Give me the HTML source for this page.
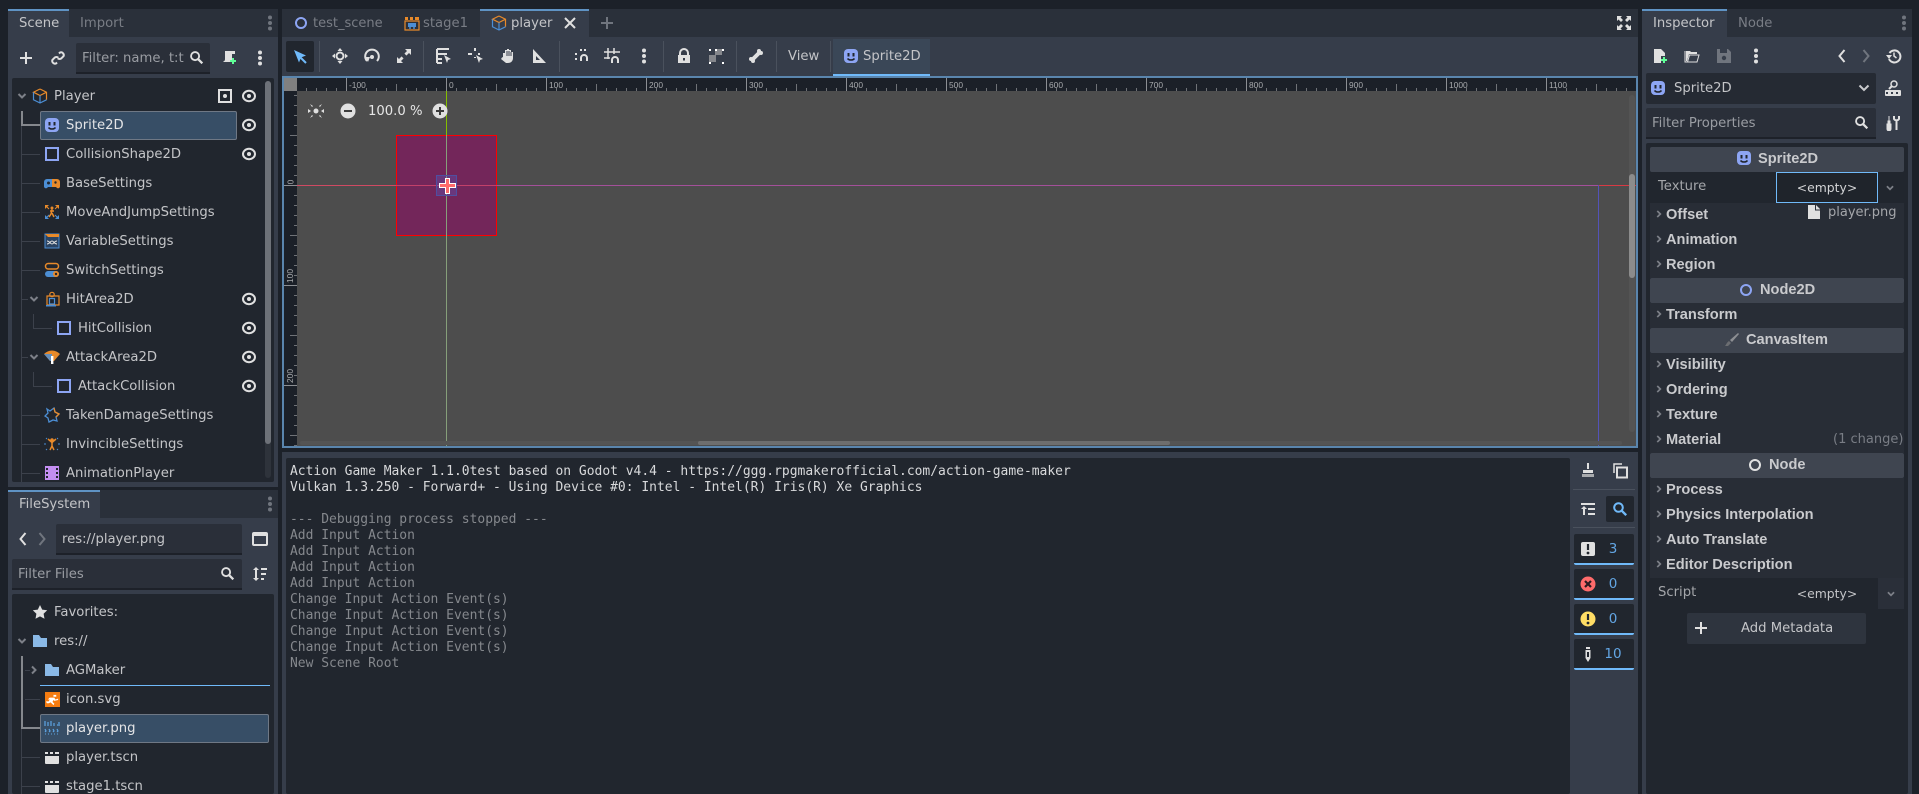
<!DOCTYPE html>
<html><head><meta charset="utf-8"><title>Editor</title>
<style>
html,body{margin:0;padding:0;background:#1c2129;overflow:hidden}
#r{position:relative;width:1919px;height:794px;overflow:hidden;background:#1c2129;font-family:"DejaVu Sans","Liberation Sans",sans-serif;font-size:13.2px;color:#c4c5c8}
#r div,#r span,#r svg{position:absolute}
.t{white-space:nowrap;line-height:20px;height:20px;margin-top:1px}
.dim{color:#797d85}
.b{font-family:"Liberation Sans",sans-serif;font-weight:bold;font-size:14.6px;color:#c9cacd}
.p{background:#363d4a}
.d{background:#21262e}
.f{background:#2a2f39;border-bottom:2px solid #1d2129;box-sizing:border-box;border-radius:2px 2px 0 0}
.hdr{background:#3f4550;left:1650px;width:254px;height:25px;border-radius:2px}
.sec{background:#282d36;left:1650px;width:254px;height:25px}
.sep{background:#4a515d;width:1px;top:41px;height:31px}
.tl{background:#3c414b}
.rl{font-family:"Liberation Sans",sans-serif;font-size:8.4px;color:#a8aaad;line-height:12px;height:12px;white-space:nowrap}
.m{font-family:"DejaVu Sans Mono","Liberation Mono",monospace;font-size:12.97px;line-height:16px;height:16px;white-space:pre;left:290px;color:#85888d;margin-top:1px}
.fb{left:1574px;width:60px;height:31px;background:#21262e;border-bottom:2px solid #70bafa;box-sizing:border-box;border-radius:2px}
.fn{left:1598px;width:30px;text-align:center;color:#63a6e4;font-size:13.5px;line-height:20px;height:20px}
.e{font-size:12.4px}
</style></head><body>
<svg width="0" height="0" style="position:absolute;left:0;top:0"><defs>
<symbol id="plus" viewBox="0 0 16 16"><path d="M8 2v12M2 8h12" stroke="#e0e0e0" stroke-width="2"/></symbol>
<symbol id="link" viewBox="0 0 16 16"><path d="M9 3.5l1-1a2.8 2.8 0 0 1 3.6 3.6l-2.2 2.2a2.8 2.8 0 0 1-3.6 0M7 12.5l-1 1a2.8 2.8 0 0 1-3.6-3.6l2.2-2.2a2.8 2.8 0 0 1 3.6 0" stroke="#e0e0e0" stroke-width="2" fill="none"/></symbol>
<symbol id="srch" viewBox="0 0 16 16"><circle cx="6.5" cy="6.5" r="4.3" stroke="#e0e0e0" stroke-width="2" fill="none"/><path d="M9.8 9.8l4.4 4.4" stroke="#e0e0e0" stroke-width="2.4"/></symbol>
<symbol id="srchb" viewBox="0 0 16 16"><circle cx="6.5" cy="6.5" r="4.3" stroke="#70bafa" stroke-width="2" fill="none"/><path d="M9.8 9.8l4.4 4.4" stroke="#70bafa" stroke-width="2.4"/></symbol>
<symbol id="vd" viewBox="0 0 16 16"><circle cx="8" cy="2.5" r="2" fill="#e0e0e0"/><circle cx="8" cy="8" r="2" fill="#e0e0e0"/><circle cx="8" cy="13.5" r="2" fill="#e0e0e0"/></symbol>
<symbol id="vdd" viewBox="0 0 16 16"><circle cx="8" cy="2.5" r="2" fill="#70757e"/><circle cx="8" cy="8" r="2" fill="#70757e"/><circle cx="8" cy="13.5" r="2" fill="#70757e"/></symbol>
<symbol id="scr" viewBox="0 0 16 16"><path d="M4 1h10v3h-3v8H2c1-1 2-1 2-3z" fill="#e0e0e0"/><path d="M12 8v6M9 11h6" stroke="#5fff97" stroke-width="2"/></symbol>
<symbol id="cube" viewBox="0 0 16 16"><path d="M8 1l6.5 3.2v7.6" stroke="#e88a2a" stroke-width="1.2" fill="none"/><path d="M8 1L1.5 4.2l6.5 3.3 6.5-3.3" stroke="#e88a2a" stroke-width="1.2" fill="none"/><path d="M1.5 4.2v7.6L8 15l6.5-3.2M8 7.5V15" stroke="#4c8ed4" stroke-width="1.2" fill="none"/></symbol>
<symbol id="eye" viewBox="0 0 16 16"><ellipse cx="8" cy="8" rx="6" ry="5.2" stroke="#e0e0e0" stroke-width="2" fill="none"/><circle cx="8" cy="8" r="2" fill="#e0e0e0"/></symbol>
<symbol id="sp" viewBox="0 0 16 16"><rect x="1" y="1" width="14" height="14" rx="4" fill="#8da5f3"/><rect x="4.5" y="5" width="2" height="3.5" fill="#21262e"/><rect x="9.5" y="5" width="2" height="3.5" fill="#21262e"/><path d="M4.5 10.5c1.5 2 5.5 2 7 0" stroke="#21262e" stroke-width="1.5" fill="none"/></symbol>
<symbol id="sq" viewBox="0 0 16 16"><rect x="2" y="2" width="12" height="12" stroke="#8da5f3" stroke-width="2" fill="none"/></symbol>
<symbol id="game" viewBox="0 0 16 16"><path d="M0 7a3 3 0 0 1 3-3h5v8H4l-1 1a2 2 0 0 1-3-2z" fill="#4c8ed4"/><path d="M8 4h5a3 3 0 0 1 3 3v4a2 2 0 0 1-3 2l-1-1H8z" fill="#e88a2a"/><circle cx="4.500" cy="8" r="1.500" fill="#21262e"/><circle cx="11.500" cy="7.500" r="1.200" fill="#21262e"/></symbol>
<symbol id="mv" viewBox="0 0 16 16"><path d="M1 1h4L1 5zM15 1v4l-4-4z" fill="#e88a2a"/><path d="M1 15v-4l4 4zM15 15h-4l4-4z" fill="#4c8ed4"/><path d="M2 2l3 3M14 2l-3 3" stroke="#e88a2a"/><path d="M2 14l3-3M14 14l-3-3" stroke="#4c8ed4"/><circle cx="8" cy="4" r="1.5" fill="#e88a2a"/><path d="M8 5.5L7 10l-2 3M8 9l2 4M6 7h4" stroke="#e88a2a" stroke-width="1.5" fill="none"/></symbol>
<symbol id="var" viewBox="0 0 16 16"><rect x="1" y="1" width="14" height="14" fill="#2b4463" stroke="#4c8ed4"/><path d="M1 1h14v3H4z" fill="#e88a2a"/><path d="M3 8c3 0 3 3 5 3s2-3 5-3M3 11c3 0 3-3 5-3s2 3 5 3" stroke="#e0e0e0" fill="none"/></symbol>
<symbol id="sw" viewBox="0 0 16 16"><rect x="1.5" y="1.5" width="13" height="5.5" rx="2.7" stroke="#e88a2a" stroke-width="1.5" fill="none"/><rect x="1" y="9" width="14" height="6" rx="3" fill="#4c8ed4"/><circle cx="12" cy="12" r="3" fill="#e88a2a"/><circle cx="12" cy="12" r="1.2" fill="#21262e"/></symbol>
<symbol id="hit" viewBox="0 0 16 16"><path d="M2 5h12v9H2z" stroke="#e88a2a" stroke-width="1.2" fill="none" transform="translate(1 0)"/><rect x="2" y="14" width="10" height="1.5" fill="#4c8ed4"/><circle cx="8" cy="3.5" r="2.2" stroke="#e88a2a" stroke-width="1.2" fill="none"/><path d="M5.5 13V7.5h5V13z" stroke="#4c8ed4" stroke-width="1.2" fill="none"/></symbol>
<symbol id="atk" viewBox="0 0 16 16"><path d="M0 5a11 11 0 0 1 16 0l-6 7H6z" fill="#e88a2a"/><path d="M0 5l6 7h2V5z" fill="#4c8ed4" opacity=".85"/><rect x="7" y="7" width="2.4" height="8" fill="#fff"/></symbol>
<symbol id="dmg" viewBox="0 0 16 16"><path d="M3 2l3 2 4-3 1 4 4 2-3 3 1 4-4-1-4 2-1-4-3-2 3-3z" stroke="#4c8ed4" stroke-width="1.3" fill="none"/><path d="M10 1l1 4 4 2-3 3" stroke="#e88a2a" stroke-width="1.3" fill="none"/></symbol>
<symbol id="inv" viewBox="0 0 16 16"><circle cx="8" cy="4" r="1.8" fill="#e88a2a"/><path d="M4 3l4 3.5L12 3M8 6v4l-2 4M8 10l2 4" stroke="#e88a2a" stroke-width="1.5" fill="none"/><path d="M0 8h2M14 8h2M2 2l1 1M14 2l-1 1M2 14l1-1M14 14l-1-1" stroke="#4c8ed4"/></symbol>
<symbol id="anim" viewBox="0 0 16 16"><path d="M1 1h14v14H1z" fill="#c38ef1"/><path d="M2 3h2v2H2zM2 7h2v2H2zM2 11h2v2H2zM12 3h2v2h-2zM12 7h2v2h-2zM12 11h2v2h-2z" fill="#21262e"/></symbol>
<symbol id="star" viewBox="0 0 16 16"><path d="M8 1l2.2 4.6 5 .7-3.6 3.5.9 5L8 12.4l-4.5 2.4.9-5L.8 6.3l5-.7z" fill="#e0e0e0"/></symbol>
<symbol id="fold" viewBox="0 0 16 16"><path d="M1 2h6l2 3h6v9H1z" fill="#8ab9e6"/></symbol>
<symbol id="ic" viewBox="0 0 16 16"><rect width="16" height="16" fill="#f57c10"/><path d="M9 3h3v2H9zM5 6h5l1 2 3-1v1.500l-4 1-1-1-1 2 2 2-1 1.500-3-3-2 1H2L1 10h3l1-2H3z" fill="#fff"/></symbol>
<symbol id="png" viewBox="0 0 16 16"><path d="M1 1v5M4 2v4M7 1v5M10 3v3M13 5h3M1 9l1 2-1 1M5 9l1 2-1 1M9 9l1 2-1 1M13 9l1 2-1 1M15 2v2" stroke="#5ea5e4" stroke-width="1.200" fill="none"/><path d="M1 14h14" stroke="#5ea5e4" stroke-dasharray="1 2"/></symbol>
<symbol id="clap" viewBox="0 0 16 16"><path d="M1 7h14v7a1 1 0 0 1-1 1H2a1 1 0 0 1-1-1z" fill="#e0e0e0"/><path d="M1 3l3 0v2H1zM6 3h3v2H6zM11 3h4v2h-4z" fill="#e0e0e0"/></symbol>
<symbol id="clapc" viewBox="0 0 16 16"><path d="M1 6h14v9H1z" fill="none" stroke="#e88a2a" stroke-width="1.200"/><path d="M1 2h3v3H1zM6 2h3v3H6zM11 2h4v3h-4z" fill="#e88a2a"/><rect x="4" y="8" width="8" height="4" fill="#4c8ed4"/><circle cx="6" cy="13" r="1" fill="#4c8ed4"/><circle cx="10" cy="13" r="1" fill="#4c8ed4"/></symbol>
<symbol id="node2" viewBox="0 0 16 16"><circle cx="8" cy="8" r="5" stroke="#8da5f3" stroke-width="2" fill="none"/></symbol>
<symbol id="node" viewBox="0 0 16 16"><circle cx="8" cy="8" r="5" stroke="#e0e0e0" stroke-width="2" fill="none"/></symbol>
<symbol id="x" viewBox="0 0 16 16"><path d="M3 3l10 10M13 3L3 13" stroke="#e0e0e0" stroke-width="2"/></symbol>
<symbol id="plusd" viewBox="0 0 16 16"><path d="M8 2v12M2 8h12" stroke="#70757e" stroke-width="2"/></symbol>
<symbol id="arr" viewBox="0 0 16 16"><path d="M2 1l12 5.500-5 2-2 5z" fill="#70bafa"/><path d="M8 8l6 6" stroke="#70bafa" stroke-width="2"/></symbol>
<symbol id="move" viewBox="0 0 16 16"><path d="M8 0l2.500 3h-5zM8 16l2.500-3h-5zM0 8l3-2.500v5zM16 8l-3-2.500v5z" fill="#e0e0e0"/><circle cx="8" cy="8" r="3.500" stroke="#e0e0e0" stroke-width="2" fill="none"/></symbol>
<symbol id="rot" viewBox="0 0 16 16"><path d="M3 13A6.800 6.800 0 1 1 13 13" stroke="#e0e0e0" stroke-width="2" fill="none"/><circle cx="8" cy="9" r="2" fill="#e0e0e0"/><path d="M1 9h5l-2 5z" fill="#e0e0e0"/></symbol>
<symbol id="scale" viewBox="0 0 16 16"><path d="M9 1h6v6l-2-2-8 8 2 2H1V9l2 2 8-8z" fill="#e0e0e0"/><rect x="6" y="6" width="4" height="4" fill="#363d4a" transform="rotate(45 8 8)"/></symbol>
<symbol id="lst" viewBox="0 0 16 16"><path d="M1 1h12M1 6h10M1 11h5M1 15h5M1 1v14" stroke="#e0e0e0" stroke-width="2" fill="none"/><path d="M8 7l7 4-3 1-1 3z" fill="#e0e0e0"/></symbol>
<symbol id="piv" viewBox="0 0 16 16"><path d="M7 0v3M0 6h4M10 6h2M7 9v1" stroke="#e0e0e0" stroke-width="2"/><path d="M8 7l7 4-3 1-1 3z" fill="#e0e0e0"/></symbol>
<symbol id="pan" viewBox="0 0 16 16"><path d="M3 9V5h2V2h2V1h2v1h2v2h2v6c0 3-2 5-5 5H6l-5-4 1-1.500z" fill="#e0e0e0"/><path d="M7 3v5M9 3v5M11 4v4" stroke="#363d4a"/></symbol>
<symbol id="rul" viewBox="0 0 16 16"><path d="M2 1v14h13z" fill="#e0e0e0"/><path d="M5 8v4h4z" fill="#363d4a"/></symbol>
<symbol id="snap" viewBox="0 0 16 16"><path d="M7 13V10a3 3 0 0 1 6 0v3" stroke="#e0e0e0" stroke-width="2" fill="none"/><path d="M1 6h2M1 11h2M6 2h2M10 2h2" stroke="#e0e0e0" stroke-width="2"/></symbol>
<symbol id="grid" viewBox="0 0 16 16"><path d="M4 0v11M10 0v6M0 4h16M0 10h6" stroke="#e0e0e0" stroke-width="1.500"/><path d="M8 15v-3a3 3 0 0 1 6 0v3" stroke="#e0e0e0" stroke-width="2" fill="none"/></symbol>
<symbol id="lock" viewBox="0 0 16 16"><path d="M4 7V5a4 4 0 0 1 8 0v2" stroke="#e0e0e0" stroke-width="2" fill="none"/><path d="M2 7h12v8H2z" fill="#e0e0e0"/><rect x="7" y="10" width="2" height="2.500" fill="#363d4a"/></symbol>
<symbol id="grp" viewBox="0 0 16 16"><path d="M7 7h7V1H7zM1 14h7V7H1z" fill="#85878c"/><path d="M1 1h2v2H1zM7 1h2v2H7zM14 1h2v2h-2zM1 14h2v2H1zM14 14h2v2h-2z" fill="#fff"/></symbol>
<symbol id="bone" viewBox="0 0 16 16"><path d="M4 12l8-8" stroke="#e0e0e0" stroke-width="4"/><circle cx="3" cy="11" r="2" fill="#e0e0e0"/><circle cx="5" cy="13" r="2" fill="#e0e0e0"/><circle cx="11" cy="3" r="2" fill="#e0e0e0"/><circle cx="13" cy="5" r="2" fill="#e0e0e0"/></symbol>
<symbol id="full" viewBox="0 0 16 16"><path d="M1 1h5L4.500 2.500 7 5 5 7 2.500 4.500 1 6zM15 1v5l-1.500-1.500L11 7 9 5l2.500-2.500L10 1zM1 15v-5l1.500 1.500L5 9l2 2-2.500 2.500L6 15zM15 15h-5l1.500-1.500L9 11l2-2 2.500 2.500L15 10z" fill="#e0e0e0"/></symbol>
<symbol id="cen" viewBox="0 0 16 16"><path d="M2 1l3 2-1 1zM14 1l-3 2 1 1zM2 15l3-2-1-1zM14 15l-3-2 1-1zM0 6l3 2-3 2zM16 6l-3 2 3 2z" fill="#e0e0e0"/><circle cx="8" cy="8" r="2.500" fill="#e0e0e0"/></symbol>
<symbol id="mi" viewBox="0 0 16 16"><circle cx="8" cy="8" r="7.500" fill="#e0e0e0"/><path d="M4 8h8" stroke="#3c3c3c" stroke-width="2"/></symbol>
<symbol id="pl" viewBox="0 0 16 16"><circle cx="8" cy="8" r="7.500" fill="#e0e0e0"/><path d="M4 8h8M8 4v8" stroke="#3c3c3c" stroke-width="2"/></symbol>
<symbol id="lay" viewBox="0 0 16 16"><rect x="1" y="2" width="14" height="12" rx="1" stroke="#e0e0e0" stroke-width="2" fill="none"/><path d="M1 4h14" stroke="#e0e0e0" stroke-width="2"/></symbol>
<symbol id="sort" viewBox="0 0 16 16"><path d="M4 1l3 3H1zM4 15l3-3H1zM3 4h2v8H3zM9 2h6v2H9zM9 7h5v2H9zM9 12h3v2H9z" fill="#e0e0e0"/></symbol>
<symbol id="new" viewBox="0 0 16 16"><path d="M2 1h7l4 4v3H9v7H2z" fill="#e0e0e0"/><path d="M12 9v6M9 12h6" stroke="#5fff97" stroke-width="2"/></symbol>
<symbol id="open" viewBox="0 0 16 16"><path d="M2 3h4l1 1h6v2H5l-2 7H2z" fill="#e0e0e0"/><path d="M5.500 7H15l-2 7H3.500z" fill="none" stroke="#e0e0e0" stroke-width="1"/><path d="M1 3v11h12" stroke="#e0e0e0" fill="none"/></symbol>
<symbol id="save" viewBox="0 0 16 16"><path d="M1 1h11l3 3v11H1z" fill="#70757e"/><rect x="4" y="1" width="7" height="4" fill="#363d4a"/><circle cx="8" cy="10" r="2.200" fill="#363d4a"/></symbol>
<symbol id="hist" viewBox="0 0 16 16"><path d="M3.500 5A6 6 0 1 1 3 11" stroke="#e0e0e0" stroke-width="2" fill="none"/><path d="M0 7h6L3 11z" fill="#e0e0e0"/><path d="M8 4.500V8l2.500 2" stroke="#e0e0e0" stroke-width="1.500" fill="none"/></symbol>
<symbol id="doc" viewBox="0 0 16 16"><circle cx="9" cy="4" r="3" stroke="#e0e0e0" stroke-width="1.500" fill="none"/><path d="M7 6L4 9" stroke="#e0e0e0" stroke-width="2"/><rect x="0" y="10" width="16" height="6" rx="1" fill="#e0e0e0"/><path d="M2 12v2M7 12v2M12 12v2" stroke="#363d4a" stroke-width="2"/></symbol>
<symbol id="tool" viewBox="0 0 16 16"><path d="M4 1v5M3 6h2v9H3zM2 9h4v5a2 2 0 0 1-4 0z" fill="#e0e0e0" stroke="#e0e0e0"/><path d="M9 1v3a3 3 0 0 0 5 0V1M11.500 6v9" stroke="#e0e0e0" stroke-width="2" fill="none"/></symbol>
<symbol id="file" viewBox="0 0 16 16"><path d="M2 1h8l4 4v10H2z" fill="#e0e0e0"/><path d="M9.500 1v5h5" stroke="#282d36" fill="none"/></symbol>
<symbol id="broom" viewBox="0 0 16 16"><path d="M7 0h2v6H7z" fill="#e0e0e0"/><path d="M3 7h10v3H3z" fill="#e0e0e0"/><path d="M2 11h12v3H2z" fill="#a8aaad"/></symbol>
<symbol id="copy" viewBox="0 0 16 16"><path d="M10 1H2v9" stroke="#e0e0e0" stroke-width="1.500" fill="none"/><rect x="5" y="4.500" width="10" height="10" stroke="#e0e0e0" stroke-width="2" fill="none"/></symbol>
<symbol id="wrap" viewBox="0 0 16 16"><path d="M1 2h14v2H1zM8 7h7v2H8zM8 12h7v2H8zM4 5l3 3H5v6H3V8H1z" fill="#e0e0e0"/></symbol>
<symbol id="msg" viewBox="0 0 16 16"><rect x="1" y="1" width="14" height="14" rx="2" fill="#e0e0e0"/><path d="M8 3v6" stroke="#21262e" stroke-width="2.200"/><circle cx="8" cy="12" r="1.400" fill="#21262e"/></symbol>
<symbol id="err" viewBox="0 0 16 16"><circle cx="8" cy="8" r="7.500" fill="#ff6b6b"/><path d="M5 5l6 6M11 5l-6 6" stroke="#2a1b20" stroke-width="2.200"/></symbol>
<symbol id="warn" viewBox="0 0 16 16"><circle cx="8" cy="8" r="7.500" fill="#ffdd65"/><path d="M8 3v6" stroke="#21262e" stroke-width="2.200"/><circle cx="8" cy="12" r="1.400" fill="#21262e"/></symbol>
<symbol id="pen" viewBox="0 0 16 16"><path d="M6 1h4v2H6zM5.500 4h5v8L8 16l-2.500-4z" fill="#e0e0e0"/><rect x="7" y="6" width="2" height="5" fill="#21262e"/></symbol>
<symbol id="chd" viewBox="0 0 16 16"><path d="M4.500 6L8 9.500 11.500 6" stroke="#7d8088" stroke-width="2" fill="none"/></symbol>
<symbol id="chdw" viewBox="0 0 16 16"><path d="M3.500 5.500L8 10l4.500-4.500" stroke="#c9cacd" stroke-width="2" fill="none"/></symbol>
<symbol id="chr" viewBox="0 0 16 16"><path d="M6 4.500L9.500 8 6 11.500" stroke="#7d8088" stroke-width="2" fill="none"/></symbol>
<symbol id="lt" viewBox="0 0 16 16"><path d="M10.500 2L5.500 8l5 6" stroke="#e0e0e0" stroke-width="2" fill="none"/></symbol>
<symbol id="gt" viewBox="0 0 16 16"><path d="M5.500 2l5 6-5 6" stroke="#70757e" stroke-width="2" fill="none"/></symbol>
<symbol id="pencil" viewBox="0 0 16 16"><path d="M14 1l1 1-7 8-2-2z" fill="#8d8f93"/><path d="M5 9l2 2-3 3H1c1-1 2-4 4-5z" fill="#6b6d71"/></symbol>
</defs></svg>

<div id="r">
<!-- left dock top -->
<div style="left:8px;top:9px;width:270px;height:28px;background:#2a303a"></div>
<div class="p" style="left:8px;top:9px;width:61px;height:28px;border-top:2px solid #5f93c4;box-sizing:border-box"></div>
<div class="t" style="left:19px;top:13px">Scene</div>
<div class="t dim" style="left:80px;top:13px">Import</div>
<svg style="left:262px;top:15px" width="16" height="16"><use href="#vdd"/></svg>
<div class="p" style="left:8px;top:37px;width:270px;height:450px"></div>
<svg style="left:18px;top:50px" width="16" height="16"><use href="#plus"/></svg>
<svg style="left:50px;top:50px" width="16" height="16"><use href="#link"/></svg>
<div class="f" style="left:76px;top:43px;width:134px;height:31px"></div>
<div class="t dim" style="left:82px;top:48px;color:#9a9da3;width:102px;overflow:hidden">Filter: name, t:t</div>
<svg style="left:189px;top:50px" width="15" height="15"><use href="#srch"/></svg>
<svg style="left:221px;top:50px" width="16" height="16"><use href="#scr"/></svg>
<svg style="left:252px;top:50px" width="16" height="16"><use href="#vd"/></svg>
<div class="d" style="left:12px;top:78px;width:262px;height:404px;border-radius:2px"></div>
<div style="left:265px;top:81px;width:6px;height:397px;background:#2e333b;border-radius:3px"></div>
<div style="left:265px;top:81px;width:6px;height:363px;background:#6d7178;border-radius:3px"></div>
<!-- tree lines -->
<div class="tl" style="left:21px;top:125px;width:1px;height:357px"></div>
<div class="tl" style="left:22px;top:154px;width:18px;height:1px"></div>
<div class="tl" style="left:22px;top:183px;width:18px;height:1px"></div>
<div class="tl" style="left:22px;top:212px;width:18px;height:1px"></div>
<div class="tl" style="left:22px;top:241px;width:18px;height:1px"></div>
<div class="tl" style="left:22px;top:270px;width:18px;height:1px"></div>
<div class="tl" style="left:22px;top:299px;width:6px;height:1px"></div>
<div class="tl" style="left:22px;top:357px;width:6px;height:1px"></div>
<div class="tl" style="left:22px;top:415px;width:18px;height:1px"></div>
<div class="tl" style="left:22px;top:444px;width:18px;height:1px"></div>
<div class="tl" style="left:22px;top:473px;width:18px;height:1px"></div>
<div class="tl" style="left:33px;top:314px;width:1px;height:14px"></div>
<div class="tl" style="left:33px;top:328px;width:19px;height:1px"></div>
<div class="tl" style="left:33px;top:372px;width:1px;height:14px"></div>
<div class="tl" style="left:33px;top:386px;width:19px;height:1px"></div>
<div style="left:21px;top:111px;width:2px;height:15px;background:#85888d"></div>
<div style="left:21px;top:124px;width:19px;height:2px;background:#85888d"></div>
<!-- rows -->
<svg style="left:14px;top:88px" width="16" height="16"><use href="#chd"/></svg>
<svg style="left:32px;top:88px" width="16" height="16"><use href="#cube"/></svg>
<div class="t" style="left:54px;top:86px">Player</div>
<div style="left:218px;top:89px;width:14px;height:14px;background:#e0e0e0"></div><div style="left:220px;top:91px;width:10px;height:10px;background:#21262e"></div><div style="left:223px;top:94px;width:4px;height:4px;background:#e0e0e0;border-radius:2px"></div>
<svg style="left:241px;top:88px" width="16" height="16"><use href="#eye"/></svg>
<div style="left:40px;top:111px;width:197px;height:29px;background:#374e66;border:1px solid #6f7885;box-sizing:border-box;border-radius:2px"></div>
<svg style="left:44px;top:117px" width="16" height="16"><use href="#sp"/></svg>
<div class="t" style="left:66px;top:115px;color:#e3e4e6">Sprite2D</div>
<svg style="left:241px;top:117px" width="16" height="16"><use href="#eye"/></svg>
<svg style="left:44px;top:146px" width="16" height="16"><use href="#sq"/></svg>
<div class="t" style="left:66px;top:144px">CollisionShape2D</div>
<svg style="left:241px;top:146px" width="16" height="16"><use href="#eye"/></svg>
<svg style="left:44px;top:175px" width="16" height="16"><use href="#game"/></svg>
<div class="t" style="left:66px;top:173px">BaseSettings</div>
<svg style="left:44px;top:204px" width="16" height="16"><use href="#mv"/></svg>
<div class="t" style="left:66px;top:202px">MoveAndJumpSettings</div>
<svg style="left:44px;top:233px" width="16" height="16"><use href="#var"/></svg>
<div class="t" style="left:66px;top:231px">VariableSettings</div>
<svg style="left:44px;top:262px" width="16" height="16"><use href="#sw"/></svg>
<div class="t" style="left:66px;top:260px">SwitchSettings</div>
<svg style="left:26px;top:291px" width="16" height="16"><use href="#chd"/></svg>
<svg style="left:44px;top:291px" width="16" height="16"><use href="#hit"/></svg>
<div class="t" style="left:66px;top:289px">HitArea2D</div>
<svg style="left:241px;top:291px" width="16" height="16"><use href="#eye"/></svg>
<svg style="left:56px;top:320px" width="16" height="16"><use href="#sq"/></svg>
<div class="t" style="left:78px;top:318px">HitCollision</div>
<svg style="left:241px;top:320px" width="16" height="16"><use href="#eye"/></svg>
<svg style="left:26px;top:349px" width="16" height="16"><use href="#chd"/></svg>
<svg style="left:44px;top:349px" width="16" height="16"><use href="#atk"/></svg>
<div class="t" style="left:66px;top:347px">AttackArea2D</div>
<svg style="left:241px;top:349px" width="16" height="16"><use href="#eye"/></svg>
<svg style="left:56px;top:378px" width="16" height="16"><use href="#sq"/></svg>
<div class="t" style="left:78px;top:376px">AttackCollision</div>
<svg style="left:241px;top:378px" width="16" height="16"><use href="#eye"/></svg>
<svg style="left:44px;top:407px" width="16" height="16"><use href="#dmg"/></svg>
<div class="t" style="left:66px;top:405px">TakenDamageSettings</div>
<svg style="left:44px;top:436px" width="16" height="16"><use href="#inv"/></svg>
<div class="t" style="left:66px;top:434px">InvincibleSettings</div>
<svg style="left:44px;top:465px" width="16" height="16"><use href="#anim"/></svg>
<div class="t" style="left:66px;top:463px">AnimationPlayer</div>

<!-- filesystem -->
<div style="left:8px;top:490px;width:270px;height:28px;background:#2a303a"></div>
<div class="p" style="left:8px;top:490px;width:92px;height:28px;border-top:2px solid #5f93c4;box-sizing:border-box"></div>
<div class="t" style="left:19px;top:494px">FileSystem</div>
<svg style="left:262px;top:496px" width="16" height="16"><use href="#vdd"/></svg>
<div class="p" style="left:8px;top:518px;width:270px;height:276px"></div>
<svg style="left:15px;top:531px" width="16" height="16"><use href="#lt"/></svg>
<svg style="left:34px;top:531px" width="16" height="16"><use href="#gt"/></svg>
<div class="f" style="left:56px;top:524px;width:186px;height:31px"></div>
<div class="t" style="left:62px;top:529px">res://player.png</div>
<svg style="left:252px;top:531px" width="16" height="16"><use href="#lay"/></svg>
<div class="f" style="left:12px;top:559px;width:230px;height:31px"></div>
<div class="t" style="left:18px;top:564px;color:#9a9da3">Filter Files</div>
<svg style="left:220px;top:566px" width="15" height="15"><use href="#srch"/></svg>
<svg style="left:252px;top:566px" width="16" height="16"><use href="#sort"/></svg>
<div class="d" style="left:12px;top:594px;width:262px;height:200px;border-radius:2px"></div>
<svg style="left:32px;top:604px" width="16" height="16"><use href="#star"/></svg>
<div class="t" style="left:54px;top:602px">Favorites:</div>
<svg style="left:14px;top:633px" width="16" height="16"><use href="#chd"/></svg>
<svg style="left:32px;top:633px" width="16" height="16"><use href="#fold"/></svg>
<div class="t" style="left:54px;top:631px">res://</div>
<div style="left:21px;top:656px;width:2px;height:73px;background:#85888d"></div>
<div style="left:21px;top:727px;width:19px;height:2px;background:#85888d"></div>
<div class="tl" style="left:25px;top:670px;width:5px;height:1px"></div>
<svg style="left:26px;top:662px" width="16" height="16"><use href="#chr"/></svg>
<svg style="left:44px;top:662px" width="16" height="16"><use href="#fold"/></svg>
<div class="t" style="left:66px;top:660px">AGMaker</div>
<div style="left:40px;top:685px;width:230px;height:1px;background:#70bafa"></div>
<div class="tl" style="left:25px;top:699px;width:15px;height:1px"></div>
<svg style="left:45px;top:692px" width="15" height="15"><use href="#ic"/></svg>
<div class="t" style="left:66px;top:689px">icon.svg</div>
<div style="left:40px;top:714px;width:229px;height:29px;background:#374e66;border:1px solid #6f7885;box-sizing:border-box;border-radius:2px"></div>
<svg style="left:44px;top:720px" width="16" height="16"><use href="#png"/></svg>
<div class="t" style="left:66px;top:718px;color:#e3e4e6">player.png</div>
<div class="tl" style="left:21px;top:729px;width:1px;height:65px"></div>
<div class="tl" style="left:22px;top:757px;width:18px;height:1px"></div>
<div class="tl" style="left:22px;top:786px;width:18px;height:1px"></div>
<svg style="left:44px;top:749px" width="16" height="16"><use href="#clap"/></svg>
<div class="t" style="left:66px;top:747px">player.tscn</div>
<svg style="left:44px;top:778px" width="16" height="16"><use href="#clap"/></svg>
<div class="t" style="left:66px;top:776px">stage1.tscn</div>

<!-- center tabs -->
<div style="left:282px;top:9px;width:1356px;height:28px;background:#2a303a"></div>
<svg style="left:293px;top:15px" width="16" height="16"><use href="#node2"/></svg>
<div class="t dim" style="left:313px;top:13px;font-size:13px">test_scene</div>
<svg style="left:404px;top:15px" width="16" height="16"><use href="#clapc"/></svg>
<div class="t dim" style="left:423px;top:13px">stage1</div>
<div class="p" style="left:480px;top:9px;width:109px;height:28px;border-top:2px solid #5f93c4;box-sizing:border-box"></div>
<svg style="left:491px;top:15px" width="16" height="16"><use href="#cube"/></svg>
<div class="t" style="left:511px;top:13px">player</div>
<svg style="left:562px;top:15px" width="16" height="16"><use href="#x"/></svg>
<svg style="left:599px;top:15px" width="16" height="16"><use href="#plusd"/></svg>
<svg style="left:1616px;top:15px" width="16" height="16"><use href="#full"/></svg>
<!-- center toolbar -->
<div class="p" style="left:282px;top:37px;width:1356px;height:39px"></div>
<div style="left:286px;top:41px;width:28px;height:31px;background:#21262e;border-radius:2px"></div>
<svg style="left:292px;top:49px" width="16" height="16"><use href="#arr"/></svg>
<div class="sep" style="left:319px"></div><div class="sep" style="left:423px"></div><div class="sep" style="left:559px"></div><div class="sep" style="left:663px"></div><div class="sep" style="left:736px"></div><div class="sep" style="left:776px"></div><div class="sep" style="left:830px"></div>
<svg style="left:332px;top:48px" width="16" height="16"><use href="#move"/></svg>
<svg style="left:364px;top:48px" width="16" height="16"><use href="#rot"/></svg>
<svg style="left:396px;top:48px" width="16" height="16"><use href="#scale"/></svg>
<svg style="left:436px;top:48px" width="16" height="16"><use href="#lst"/></svg>
<svg style="left:468px;top:48px" width="16" height="16"><use href="#piv"/></svg>
<svg style="left:500px;top:48px" width="16" height="16"><use href="#pan"/></svg>
<svg style="left:531px;top:48px" width="16" height="16"><use href="#rul"/></svg>
<svg style="left:574px;top:48px" width="16" height="16"><use href="#snap"/></svg>
<svg style="left:604px;top:48px" width="16" height="16"><use href="#grid"/></svg>
<svg style="left:636px;top:48px" width="16" height="16"><use href="#vd"/></svg>
<svg style="left:676px;top:48px" width="16" height="16"><use href="#lock"/></svg>
<svg style="left:708px;top:48px" width="16" height="16"><use href="#grp"/></svg>
<svg style="left:748px;top:48px" width="16" height="16"><use href="#bone"/></svg>
<div class="t" style="left:788px;top:46px">View</div>
<div style="left:833px;top:39px;width:97px;height:37px;background:#3a4757;border-bottom:2px solid #70bafa;box-sizing:border-box"></div>
<svg style="left:843px;top:48px" width="16" height="16"><use href="#sp"/></svg>
<div class="t" style="left:863px;top:46px">Sprite2D</div>

<!-- viewport -->
<div style="left:282px;top:76px;width:1356px;height:372px;background:#5a85ad"></div>
<div style="left:284px;top:78px;width:1352px;height:368px;background:#4d4d4d"></div>
<div style="left:284px;top:78px;width:1352px;height:13px;background:#1b2028"></div>
<div style="left:284px;top:78px;width:13px;height:368px;background:#1b2028"></div>
<div style="left:284px;top:78px;width:13px;height:13px;background:#808080"></div>
<!-- ruler ticks -->
<svg style="left:297px;top:78px" width="1339" height="13"><defs><pattern id="hm" x="-1" y="0" width="10" height="13" patternUnits="userSpaceOnUse"><rect x="0" y="10" width="1" height="3" fill="#6f7277"/></pattern><pattern id="hd" x="-1" y="0" width="50" height="13" patternUnits="userSpaceOnUse"><rect x="0" y="6" width="1" height="7" fill="#6f7277"/></pattern><pattern id="hj" x="49" y="0" width="100" height="13" patternUnits="userSpaceOnUse"><rect x="0" y="0" width="1" height="13" fill="#8b8e93"/></pattern></defs><rect width="1339" height="13" fill="url(#hm)"/><rect width="1339" height="13" fill="url(#hd)"/><rect width="1339" height="13" fill="url(#hj)"/></svg>
<svg style="left:284px;top:91px" width="13" height="355"><defs><pattern id="vm" x="0" y="4" width="13" height="10" patternUnits="userSpaceOnUse"><rect x="10" y="0" width="3" height="1" fill="#6f7277"/></pattern><pattern id="vd2" x="0" y="44" width="13" height="50" patternUnits="userSpaceOnUse"><rect x="6" y="0" width="7" height="1" fill="#6f7277"/></pattern><pattern id="vj" x="0" y="94" width="13" height="100" patternUnits="userSpaceOnUse"><rect x="0" y="0" width="13" height="1" fill="#8b8e93"/></pattern></defs><rect width="13" height="355" fill="url(#vm)"/><rect width="13" height="355" fill="url(#vd2)"/><rect width="13" height="355" fill="url(#vj)"/></svg>
<div class="rl" style="left:349px;top:79px">-100</div><div class="rl" style="left:449px;top:79px">0</div><div class="rl" style="left:549px;top:79px">100</div><div class="rl" style="left:649px;top:79px">200</div><div class="rl" style="left:749px;top:79px">300</div><div class="rl" style="left:849px;top:79px">400</div><div class="rl" style="left:949px;top:79px">500</div><div class="rl" style="left:1049px;top:79px">600</div><div class="rl" style="left:1149px;top:79px">700</div><div class="rl" style="left:1249px;top:79px">800</div><div class="rl" style="left:1349px;top:79px">900</div><div class="rl" style="left:1449px;top:79px">1000</div><div class="rl" style="left:1549px;top:79px">1100</div>
<div class="rl" style="left:284px;top:176px;transform:rotate(-90deg);width:13px;text-align:center">0</div>
<div class="rl" style="left:278px;top:270px;transform:rotate(-90deg);width:24px;text-align:center">100</div>
<div class="rl" style="left:278px;top:370px;transform:rotate(-90deg);width:24px;text-align:center">200</div>
<!-- canvas -->
<div style="left:396px;top:135px;width:101px;height:101px;background:#73265a;border:1px solid #f00;box-sizing:border-box"></div>
<div style="left:446px;top:91px;width:1px;height:44px;background:#84bf00"></div>
<div style="left:446px;top:135px;width:1px;height:311px;background:#869f7a"></div>
<div style="left:297px;top:185px;width:99px;height:1px;background:#d04a63"></div>
<div style="left:396px;top:185px;width:101px;height:1px;background:#c2406a"></div>
<div style="left:497px;top:185px;width:1101px;height:1px;background:#a4509a"></div>
<div style="left:1598px;top:185px;width:38px;height:1px;background:#d83a44"></div>
<div style="left:1598px;top:185px;width:1px;height:261px;background:#5353b8"></div>
<div style="left:436px;top:175px;width:21px;height:21px;background:rgba(90,90,190,.35);border:1px solid #4f4fa0;box-sizing:border-box"></div>
<div style="left:445px;top:178px;width:5px;height:16px;background:#ff6b6b;border:1px solid #fff;box-sizing:border-box"></div>
<div style="left:439px;top:183px;width:17px;height:5px;background:#ff6b6b;border:1px solid #fff;box-sizing:border-box"></div>
<div style="left:446px;top:183px;width:3px;height:5px;background:#ff6b6b"></div>
<svg style="left:308px;top:103px" width="16" height="16"><use href="#cen"/></svg>
<svg style="left:340px;top:103px" width="16" height="16"><use href="#mi"/></svg>
<div class="t" style="left:368px;top:101px;color:#e6e6e6">100.0 %</div>
<svg style="left:432px;top:103px" width="16" height="16"><use href="#pl"/></svg>
<div style="left:1629px;top:95px;width:6px;height:337px;background:#545454;border-radius:3px"></div>
<div style="left:1629px;top:174px;width:6px;height:104px;background:#8c8c8c;border-radius:3px"></div>
<div style="left:300px;top:441px;width:1322px;height:4px;background:#545454;border-radius:2px"></div>
<div style="left:698px;top:441px;width:472px;height:4px;background:#6e6e6e;border-radius:2px"></div>

<!-- bottom -->
<div class="p" style="left:282px;top:452px;width:1356px;height:342px"></div>
<div class="d" style="left:286px;top:458px;width:1284px;height:336px;border-radius:2px"></div>
<div class="m" style="top:463px;color:#d8d9db">Action Game Maker 1.1.0test based on Godot v4.4 - https://ggg.rpgmakerofficial.com/action-game-maker</div>
<div class="m" style="top:479px;color:#d8d9db">Vulkan 1.3.250 - Forward+ - Using Device #0: Intel - Intel(R) Iris(R) Xe Graphics</div>
<div class="m" style="top:511px">--- Debugging process stopped ---</div>
<div class="m" style="top:527px">Add Input Action</div>
<div class="m" style="top:543px">Add Input Action</div>
<div class="m" style="top:559px">Add Input Action</div>
<div class="m" style="top:575px">Add Input Action</div>
<div class="m" style="top:591px">Change Input Action Event(s)</div>
<div class="m" style="top:607px">Change Input Action Event(s)</div>
<div class="m" style="top:623px">Change Input Action Event(s)</div>
<div class="m" style="top:639px">Change Input Action Event(s)</div>
<div class="m" style="top:655px">New Scene Root</div>
<svg style="left:1580px;top:463px" width="16" height="16"><use href="#broom"/></svg>
<svg style="left:1612px;top:463px" width="16" height="16"><use href="#copy"/></svg>
<div style="left:1573px;top:489px;width:62px;height:1px;background:#4a515d"></div>
<svg style="left:1580px;top:501px" width="16" height="16"><use href="#wrap"/></svg>
<div class="d" style="left:1606px;top:496px;width:28px;height:26px;border-radius:2px"></div>
<svg style="left:1612px;top:501px" width="16" height="16"><use href="#srchb"/></svg>
<div style="left:1573px;top:527px;width:62px;height:1px;background:#4a515d"></div>
<div class="fb" style="top:534px"></div><svg style="left:1580px;top:541px" width="16" height="16"><use href="#msg"/></svg><div class="fn" style="top:539px">3</div>
<div class="fb" style="top:569px"></div><svg style="left:1580px;top:576px" width="16" height="16"><use href="#err"/></svg><div class="fn" style="top:574px">0</div>
<div class="fb" style="top:604px"></div><svg style="left:1580px;top:611px" width="16" height="16"><use href="#warn"/></svg><div class="fn" style="top:609px">0</div>
<div class="fb" style="top:639px"></div><svg style="left:1580px;top:646px" width="16" height="16"><use href="#pen"/></svg><div class="fn" style="top:644px">10</div>

<!-- inspector -->
<div style="left:1642px;top:9px;width:270px;height:28px;background:#2a303a"></div>
<div class="p" style="left:1642px;top:9px;width:85px;height:28px;border-top:2px solid #5f93c4;box-sizing:border-box"></div>
<div class="t" style="left:1653px;top:13px">Inspector</div>
<div class="t dim" style="left:1738px;top:13px">Node</div>
<svg style="left:1896px;top:15px" width="16" height="16"><use href="#vdd"/></svg>
<div class="p" style="left:1642px;top:37px;width:270px;height:757px"></div>
<svg style="left:1652px;top:48px" width="16" height="16"><use href="#new"/></svg>
<svg style="left:1684px;top:48px" width="16" height="16"><use href="#open"/></svg>
<svg style="left:1716px;top:48px" width="16" height="16"><use href="#save"/></svg>
<svg style="left:1748px;top:48px" width="16" height="16"><use href="#vd"/></svg>
<svg style="left:1834px;top:48px" width="16" height="16"><use href="#lt"/></svg>
<svg style="left:1858px;top:48px" width="16" height="16"><use href="#gt"/></svg>
<svg style="left:1886px;top:48px" width="16" height="16"><use href="#hist"/></svg>
<div class="d" style="left:1646px;top:73px;width:230px;height:31px;background:#252a33;border-radius:2px"></div>
<svg style="left:1650px;top:80px" width="16" height="16"><use href="#sp"/></svg>
<div class="t" style="left:1674px;top:78px">Sprite2D</div>
<svg style="left:1856px;top:80px" width="16" height="16"><use href="#chdw"/></svg>
<svg style="left:1885px;top:80px" width="16" height="16"><use href="#doc"/></svg>
<div class="f" style="left:1646px;top:108px;width:230px;height:31px"></div>
<div class="t" style="left:1652px;top:113px;color:#9a9da3">Filter Properties</div>
<svg style="left:1854px;top:115px" width="15" height="15"><use href="#srch"/></svg>
<svg style="left:1885px;top:115px" width="16" height="16"><use href="#tool"/></svg>
<div class="d" style="left:1646px;top:143px;width:262px;height:651px;border-radius:2px"></div>

<div class="hdr" style="top:147px"></div>
<svg style="left:1736px;top:150px" width="16" height="16"><use href="#sp"/></svg>
<div class="t b" style="left:1758px;top:148px">Sprite2D</div>
<div style="left:1650px;top:172px;width:254px;height:31px;background:#21262e"></div>
<div class="t" style="left:1658px;top:176px;color:#a4a6aa">Texture</div>
<div style="left:1776px;top:172px;width:102px;height:31px;background:#1f242b;border:1px solid #70baf9;box-sizing:border-box"></div>
<div class="t e" style="left:1776px;top:177px;width:102px;text-align:center;color:#d2d3d5">&lt;empty&gt;</div>
<svg style="left:1883px;top:181px" width="14" height="14"><use href="#chd"/></svg>

<div class="sec" style="top:203px;height:75px"></div>
<div class="sec" style="top:303px"></div>
<div class="sec" style="top:353px;height:100px"></div>
<div class="sec" style="top:478px;height:100px"></div>
<svg style="left:1652px;top:207px" width="14" height="14"><use href="#chr"/></svg><div class="t b" style="left:1666px;top:204px">Offset</div>
<svg style="left:1806px;top:204px" width="16" height="16"><use href="#file"/></svg>
<div class="t" style="left:1828px;top:202px;color:#a4a6aa;font-size:13px">player.png</div>
<svg style="left:1652px;top:232px" width="14" height="14"><use href="#chr"/></svg><div class="t b" style="left:1666px;top:229px">Animation</div>
<svg style="left:1652px;top:257px" width="14" height="14"><use href="#chr"/></svg><div class="t b" style="left:1666px;top:254px">Region</div>
<div class="hdr" style="top:278px"></div>
<svg style="left:1738px;top:282px" width="16" height="16"><use href="#node2"/></svg>
<div class="t b" style="left:1760px;top:279px">Node2D</div>
<svg style="left:1652px;top:307px" width="14" height="14"><use href="#chr"/></svg><div class="t b" style="left:1666px;top:304px">Transform</div>
<div class="hdr" style="top:328px"></div>
<svg style="left:1724px;top:332px" width="16" height="16"><use href="#pencil"/></svg>
<div class="t b" style="left:1746px;top:329px">CanvasItem</div>
<svg style="left:1652px;top:357px" width="14" height="14"><use href="#chr"/></svg><div class="t b" style="left:1666px;top:354px">Visibility</div>
<svg style="left:1652px;top:382px" width="14" height="14"><use href="#chr"/></svg><div class="t b" style="left:1666px;top:379px">Ordering</div>
<svg style="left:1652px;top:407px" width="14" height="14"><use href="#chr"/></svg><div class="t b" style="left:1666px;top:404px">Texture</div>
<svg style="left:1652px;top:432px" width="14" height="14"><use href="#chr"/></svg><div class="t b" style="left:1666px;top:429px">Material</div>
<div class="t dim" style="left:1833px;top:429px;font-size:13px">(1 change)</div>
<div class="hdr" style="top:453px"></div>
<svg style="left:1747px;top:457px" width="16" height="16"><use href="#node"/></svg>
<div class="t b" style="left:1769px;top:454px">Node</div>
<svg style="left:1652px;top:482px" width="14" height="14"><use href="#chr"/></svg><div class="t b" style="left:1666px;top:479px">Process</div>
<svg style="left:1652px;top:507px" width="14" height="14"><use href="#chr"/></svg><div class="t b" style="left:1666px;top:504px">Physics Interpolation</div>
<svg style="left:1652px;top:532px" width="14" height="14"><use href="#chr"/></svg><div class="t b" style="left:1666px;top:529px">Auto Translate</div>
<svg style="left:1652px;top:557px" width="14" height="14"><use href="#chr"/></svg><div class="t b" style="left:1666px;top:554px">Editor Description</div>
<div class="t" style="left:1658px;top:582px;color:#a4a6aa">Script</div>
<div class="t e" style="left:1776px;top:583px;width:102px;text-align:center;color:#c4c5c8">&lt;empty&gt;</div>
<div style="left:1878px;top:578px;width:26px;height:31px;background:#2a2f39"></div>
<svg style="left:1884px;top:587px" width="14" height="14"><use href="#chd"/></svg>
<div style="left:1687px;top:613px;width:179px;height:31px;background:#2e343e;border-radius:2px"></div>
<svg style="left:1693px;top:620px" width="16" height="16"><use href="#plus"/></svg>
<div class="t" style="left:1741px;top:618px">Add Metadata</div>
</div>
</body></html>
